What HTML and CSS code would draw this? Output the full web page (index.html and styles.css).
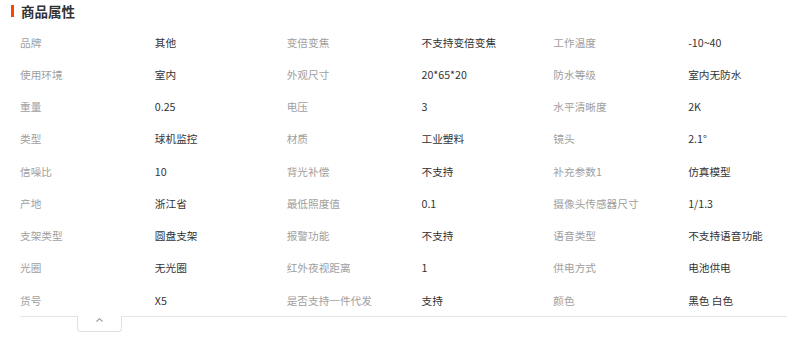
FILE: index.html
```html
<!DOCTYPE html>
<html lang="zh">
<head>
<meta charset="utf-8">
<title>商品属性</title>
<link rel="stylesheet" href="styles.css">
</head>
<body>
<div class="attrs">
  <h2 class="title"><span class="bar"></span>商品属性</h2>
  <div class="grid">
    <div class="k">品牌</div><div class="v">其他</div>
    <div class="k">变倍变焦</div><div class="v">不支持变倍变焦</div>
    <div class="k">工作温度</div><div class="v">-10~40</div>

    <div class="k">使用环境</div><div class="v">室内</div>
    <div class="k">外观尺寸</div><div class="v">20*65*20</div>
    <div class="k">防水等级</div><div class="v">室内无防水</div>

    <div class="k">重量</div><div class="v">0.25</div>
    <div class="k">电压</div><div class="v">3</div>
    <div class="k">水平清晰度</div><div class="v">2K</div>

    <div class="k">类型</div><div class="v">球机监控</div>
    <div class="k">材质</div><div class="v">工业塑料</div>
    <div class="k">镜头</div><div class="v">2.1°</div>

    <div class="k">信噪比</div><div class="v">10</div>
    <div class="k">背光补偿</div><div class="v">不支持</div>
    <div class="k">补充参数1</div><div class="v">仿真模型</div>

    <div class="k">产地</div><div class="v">浙江省</div>
    <div class="k">最低照度值</div><div class="v">0.1</div>
    <div class="k">摄像头传感器尺寸</div><div class="v">1/1.3</div>

    <div class="k">支架类型</div><div class="v">圆盘支架</div>
    <div class="k">报警功能</div><div class="v">不支持</div>
    <div class="k">语音类型</div><div class="v">不支持语音功能</div>

    <div class="k">光圈</div><div class="v">无光圈</div>
    <div class="k">红外夜视距离</div><div class="v">1</div>
    <div class="k">供电方式</div><div class="v">电池供电</div>

    <div class="k">货号</div><div class="v">X5</div>
    <div class="k">是否支持一件代发</div><div class="v">支持</div>
    <div class="k">颜色</div><div class="v">黑色 白色</div>
  </div>
  <div class="foot">
    <button class="toggle" type="button" aria-label="收起">
      <svg width="7" height="4" viewBox="0 0 7 4"><path d="M0.5 3.5 L3.5 0.7 L6.5 3.5" fill="none" stroke="#999" stroke-width="1.1"/></svg>
    </button>
  </div>
</div>
</body>
</html>
```
FILE: styles.css
```css
html, body {
  margin: 0;
  padding: 0;
  background: #fff;
}
body {
  font-family: "Noto Sans CJK SC", "Noto Sans", sans-serif;
  color: #333;
}
.attrs {
  padding-left: 20px;
}
.title {
  position: relative;
  margin: 0;
  height: 26px;
  padding-top: 1px;
  box-sizing: border-box;
  font-size: 13.5px;
  line-height: 20px;
  font-weight: bold;
  color: #333;
  padding-left: 1px;
}
.title .bar {
  position: absolute;
  left: -9px;
  top: 5px;
  width: 3px;
  height: 12px;
  background: #ff4400;
}
.grid {
  display: grid;
  grid-template-columns: 133.33px 133.33px 133.33px 133.33px 133.33px 1fr;
  grid-auto-rows: 32.25px;
  border-bottom: 1px solid #e6e6e6;
  font-size: 10.67px;
}
.k, .v {
  display: flex;
  align-items: center;
  white-space: nowrap;
}
.k {
  color: #a0a0a0;
}
.v {
  color: #333;
  padding-left: 1.5px;
}
.foot {
  height: 30px;
}
.toggle {
  display: flex;
  align-items: flex-start;
  justify-content: center;
  margin: -1px 0 0 57px;
  width: 45px;
  height: 16px;
  padding: 2px 0 0;
  background: #fff;
  border: 1px solid #e0e0e0;
  border-top: none;
  border-radius: 0 0 4px 4px;
  box-sizing: border-box;
  cursor: pointer;
}
```
